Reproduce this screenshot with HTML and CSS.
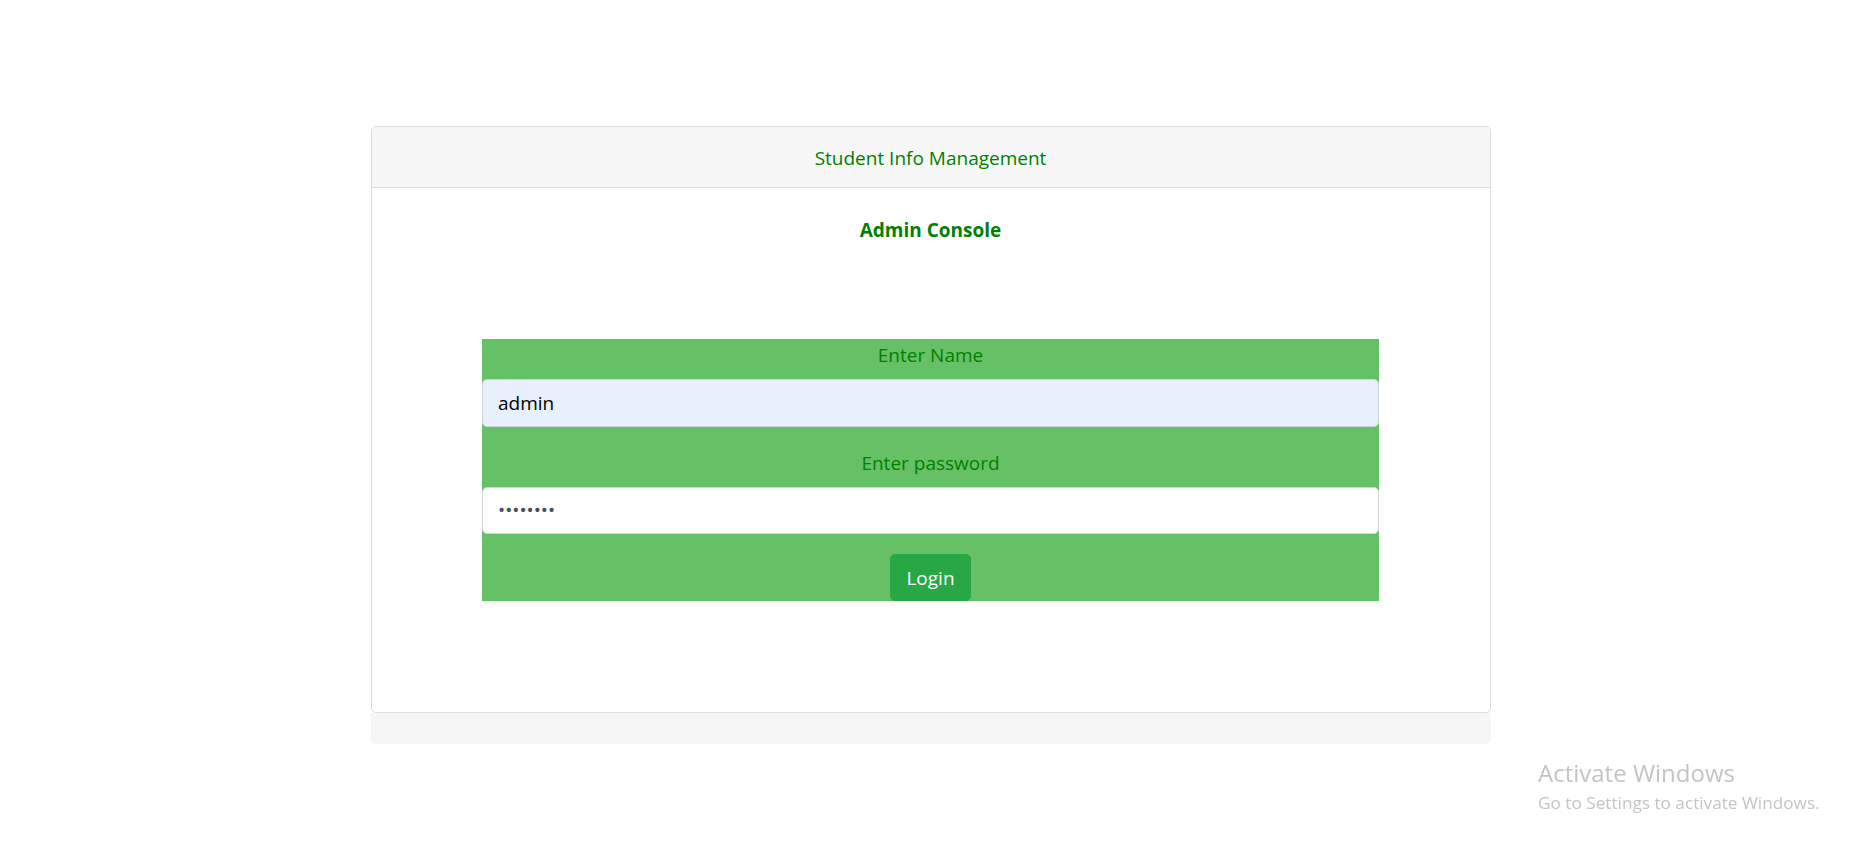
FILE: index.html
```html
<!DOCTYPE html>
<html>
<head>
<meta charset="utf-8">
<title>Student Info Management</title>
<link rel="stylesheet" href="styles.css">
</head>
<body>
<div class="page">
  <div class="card">
    <div class="card-header">Student Info Management</div>
    <div class="card-body">
      <div class="title">Admin Console</div>
      <form class="login-box">
        <div class="form-group">
          <label class="label">Enter Name</label>
          <input class="input input-filled" type="text" value="admin">
        </div>
        <div class="form-group">
          <label class="label">Enter password</label>
          <input class="input" type="password" value="password">
        </div>
        <button class="btn" type="button">Login</button>
      </form>
    </div>
  </div>
  <div class="card-footer"></div>
</div>
<div class="activate">
  <div class="activate-title">Activate Windows</div>
  <div class="activate-sub">Go to Settings to activate Windows.</div>
</div>
</body>
</html>
```
FILE: styles.css
```css
* { box-sizing: border-box; }
html, body { margin: 0; padding: 0; background: #fff; }
body {
  font-family: "Open Sans", "Noto Sans", sans-serif;
  font-size: 19px;
  line-height: 30px;
  color: #212529;
}
.page {
  width: 1121px;
  margin: 126px auto 0;
  padding-left: 1px;
}
.card {
  border: 1px solid #dcdcdc;
  border-radius: 5px;
  background: #fff;
  overflow: hidden;
}
.card-header {
  background: #f7f7f7;
  border-bottom: 1px solid #dcdcdc;
  padding: 16px 25px 14px;
  text-align: center;
  color: #008000;
}
.card-body {
  padding: 27px 25px 111px;
  text-align: center;
}
.title {
  font-weight: 700;
  color: #008000;
  margin-bottom: 94px;
}
.login-box {
  width: 897px;
  margin: 0 auto;
  background: #66c166;
  display: flex;
  flex-direction: column;
  align-items: center;
}
.form-group {
  width: 100%;
  display: flex;
  flex-direction: column;
  margin-bottom: 20px;
}
.label {
  color: #008000;
  padding-top: 1px;
  margin-bottom: 9px;
}
.input {
  display: block;
  width: 100%;
  height: 47.5px;
  padding: 7.5px 15px;
  font-family: inherit;
  font-size: 19px;
  line-height: 30px;
  color: #495057;
  background: #fff;
  border: 1px solid #ced4da;
  border-radius: 5px;
  outline: none;
}
.input-filled {
  background: #e8f0fe;
  color: #000;
}
.btn {
  height: 47px;
  padding: 7.5px 15px;
  font-family: inherit;
  font-size: 19px;
  line-height: 30px;
  color: #fff;
  background: #28a745;
  border: 1px solid #28a745;
  border-radius: 5px;
}
.card-footer {
  height: 31px;
  background: #f6f6f6;
  border-radius: 0 0 5px 5px;
}
.activate {
  position: fixed;
  left: 1538px;
  top: 757px;
  color: #c4c4c4;
  font-family: "Open Sans", "Noto Sans", sans-serif;
}
.activate-title {
  font-size: 24px;
  line-height: 32px;
}
.activate-sub {
  font-size: 17.2px;
  line-height: 28px;
}
```
